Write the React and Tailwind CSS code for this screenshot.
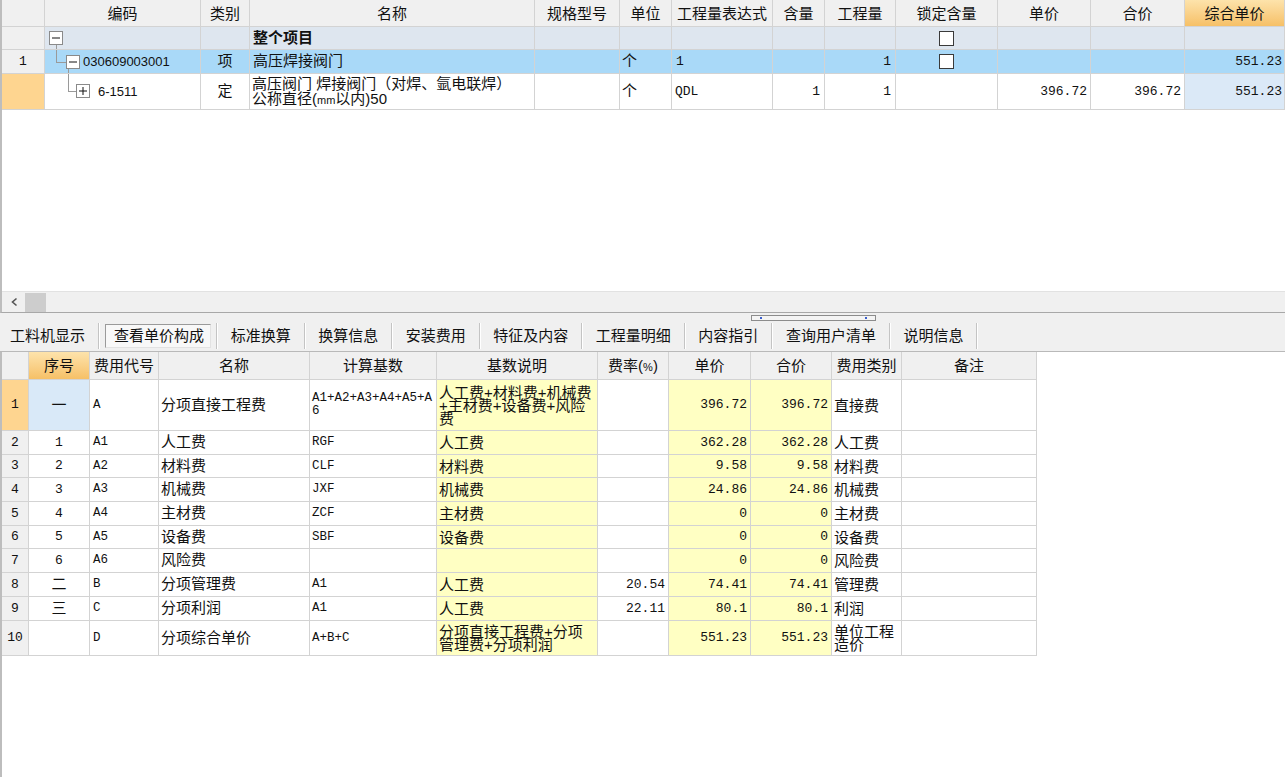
const CJK = "font-['Liberation_Sans','Noto_Sans_CJK_SC',sans-serif]";
const MONO = "font-['Liberation_Mono','Noto_Sans_CJK_SC',monospace]";

const TOP_GRID =
  "grid grid-cols-[43px_156px_49px_285px_85px_52px_101px_52px_71px_102px_93px_94px_100px]";
const BOT_GRID =
  "grid grid-cols-[27px_61px_69px_151px_127px_161px_71px_82px_81px_70px_135px]";

const cell = "border-r border-b border-[#d3d3d3] flex items-center overflow-hidden";

function TreeBox({ plus, className }) {
  return (
    <svg width="14" height="14" viewBox="0 0 14 14" className={className}>
      <rect x="0.5" y="0.5" width="13" height="13" fill="#fff" stroke="#8a8a8a" />
      <line x1="3" y1="7" x2="11" y2="7" stroke="#111" strokeWidth="1" />
      {plus && <line x1="7" y1="3" x2="7" y2="11" stroke="#111" strokeWidth="1" />}
    </svg>
  );
}

function Check() {
  return <div className="w-[15px] h-[15px] border border-[#3a3a3a] bg-white" />;
}

const topHeads = ["", "编码", "类别", "名称", "规格型号", "单位", "工程量表达式", "含量", "工程量", "锁定含量", "单价", "合价", "综合单价"];

function TopTable() {
  return (
    <div className="text-[15px] text-[#111]">
      {/* header */}
      <div className={`${TOP_GRID} h-[27px]`}>
        {topHeads.map((h, i) => (
          <div
            key={i}
            className={`${cell} justify-center pt-[2px] ${
              i === 12 ? "bg-gradient-to-b from-[#fde3ab] to-[#f6c066]" : "bg-[#f0f0f0]"
            }`}
          >
            {h}
          </div>
        ))}
      </div>

      {/* 整个项目 */}
      <div className={`${TOP_GRID} h-[23px]`}>
        <div className={`${cell} bg-[#f0f0f0]`} />
        <div className={`${cell} bg-[#dee6ef] relative`}>
          <TreeBox className="absolute left-[4px] top-[4px]" />
          <div className="absolute left-[11px] top-[18px] bottom-0 w-px bg-[#9a9a9a]" />
        </div>
        <div className={`${cell} bg-[#dee6ef]`} />
        <div className={`${cell} bg-[#dee6ef] pl-[3px] font-bold`}>整个项目</div>
        <div className={`${cell} bg-[#dee6ef]`} />
        <div className={`${cell} bg-[#dee6ef]`} />
        <div className={`${cell} bg-[#dee6ef]`} />
        <div className={`${cell} bg-[#dee6ef]`} />
        <div className={`${cell} bg-[#dee6ef]`} />
        <div className={`${cell} bg-[#dee6ef] justify-center`}>
          <Check />
        </div>
        <div className={`${cell} bg-[#dee6ef]`} />
        <div className={`${cell} bg-[#dee6ef]`} />
        <div className={`${cell} bg-[#dee6ef]`} />
      </div>

      {/* row 1 */}
      <div className={`${TOP_GRID} h-[24px]`}>
        <div className={`${cell} bg-[#f0f0f0] justify-center ${MONO} text-[13px]`}>1</div>
        <div className={`${cell} bg-[#a9d9f8] relative`}>
          <div className="absolute left-[11px] top-0 h-[12px] w-px bg-[#9a9a9a]" />
          <div className="absolute left-[11px] top-[12px] w-[10px] h-px bg-[#9a9a9a]" />
          <TreeBox className="absolute left-[21px] top-[5px]" />
          <div className="absolute left-[23px] top-[19px] bottom-0 w-px bg-[#9a9a9a]" />
          <span className="pl-[38px] text-[13px]">030609003001</span>
        </div>
        <div className={`${cell} bg-[#a9d9f8] justify-center`}>项</div>
        <div className={`${cell} bg-[#a9d9f8] pl-[3px]`}>高压焊接阀门</div>
        <div className={`${cell} bg-[#a9d9f8]`} />
        <div className={`${cell} bg-[#a9d9f8] pl-[2px]`}>个</div>
        <div className={`${cell} bg-[#a9d9f8] pl-[4px] ${MONO} text-[13px]`}>1</div>
        <div className={`${cell} bg-[#a9d9f8]`} />
        <div className={`${cell} bg-[#a9d9f8] justify-end pr-[4px] ${MONO} text-[13px]`}>1</div>
        <div className={`${cell} bg-[#a9d9f8] justify-center`}>
          <Check />
        </div>
        <div className={`${cell} bg-[#a9d9f8]`} />
        <div className={`${cell} bg-[#a9d9f8]`} />
        <div className={`${cell} bg-[#a9d9f8] justify-end pr-[2px] ${MONO} text-[13px]`}>551.23</div>
      </div>

      {/* row 2 */}
      <div className={`${TOP_GRID} h-[36px]`}>
        <div className={`${cell} bg-[#fed590]`} />
        <div className={`${cell} bg-white relative`}>
          <div className="absolute left-[23px] top-0 h-[17px] w-px bg-[#9a9a9a]" />
          <div className="absolute left-[23px] top-[17px] w-[8px] h-px bg-[#9a9a9a]" />
          <TreeBox plus className="absolute left-[31px] top-[10px]" />
          <span className="pl-[53px] text-[13px]">6-1511</span>
        </div>
        <div className={`${cell} bg-white justify-center`}>定</div>
        <div className={`${cell} bg-white pl-[2px] leading-[15px]`}>
          <div>
            <div>高压阀门 焊接阀门（对焊、氩电联焊）</div>
            <div>
              公称直径(<span className="text-[11px]">mm</span>以内)50
            </div>
          </div>
        </div>
        <div className={`${cell} bg-white`} />
        <div className={`${cell} bg-white pl-[2px]`}>个</div>
        <div className={`${cell} bg-white pl-[3px] ${MONO} text-[13px]`}>QDL</div>
        <div className={`${cell} bg-white justify-end pr-[4px] ${MONO} text-[13px]`}>1</div>
        <div className={`${cell} bg-white justify-end pr-[4px] ${MONO} text-[13px]`}>1</div>
        <div className={`${cell} bg-white`} />
        <div className={`${cell} bg-white justify-end pr-[3px] ${MONO} text-[13px]`}>396.72</div>
        <div className={`${cell} bg-white justify-end pr-[3px] ${MONO} text-[13px]`}>396.72</div>
        <div className={`${cell} bg-[#dbe9f7] justify-end pr-[2px] ${MONO} text-[13px]`}>551.23</div>
      </div>
    </div>
  );
}

const tabs = ["工料机显示", "查看单价构成", "标准换算", "换算信息", "安装费用", "特征及内容", "工程量明细", "内容指引", "查询用户清单", "说明信息"];

function TabBar() {
  return (
    <div className="relative h-[39px] bg-[#f0f0f0] border-b border-[#b9b9b9] flex items-start pt-[10px] text-[15px] text-[#111]">
      <div className="absolute left-[751px] top-[2px] w-[125px] h-[6px] border border-[#8c8c8c] bg-[#f4f4f4]">
        <div className="absolute left-[8px] top-[1px] w-[2px] h-[2px] bg-[#3a5fcd]" />
        <div className="absolute right-[8px] top-[1px] w-[2px] h-[2px] bg-[#3a5fcd]" />
      </div>
      {tabs.map((t, i) => (
        <div key={t} className="flex items-center">
          {i === 1 ? (
            <div className="px-[5px]">
              <div className="h-[24px] flex items-center pt-px pl-[8px] pr-[6px] border border-[#9a9a9a] border-b-[#e2e2e2] border-r-[#e2e2e2] bg-[#f8f8f8]">
                {t}
              </div>
            </div>
          ) : (
            <div className={`h-[24px] flex items-center pt-px ${i === 0 ? "pl-[10px] pr-[13px]" : "px-[12.75px]"}`}>{t}</div>
          )}
          <div className="h-[26px] w-[2px] border-l border-[#c4c4c4] bg-white" />
        </div>
      ))}
    </div>
  );
}

const botHeads = ["", "序号", "费用代号", "名称", "计算基数", "基数说明", "费率(%)", "单价", "合价", "费用类别", "备注"];

const rows = [
  { n: "1", seq: "一", code: "A", name: "分项直接工程费", base: "A1+A2+A3+A4+A5+A6", desc: "人工费+材料费+机械费+主材费+设备费+风险费", rate: "", price: "396.72", total: "396.72", type: "直接费", h: "h-[51px]" },
  { n: "2", seq: "1", code: "A1", name: "人工费", base: "RGF", desc: "人工费", rate: "", price: "362.28", total: "362.28", type: "人工费", h: "h-[24px]" },
  { n: "3", seq: "2", code: "A2", name: "材料费", base: "CLF", desc: "材料费", rate: "", price: "9.58", total: "9.58", type: "材料费", h: "h-[23px]" },
  { n: "4", seq: "3", code: "A3", name: "机械费", base: "JXF", desc: "机械费", rate: "", price: "24.86", total: "24.86", type: "机械费", h: "h-[24px]" },
  { n: "5", seq: "4", code: "A4", name: "主材费", base: "ZCF", desc: "主材费", rate: "", price: "0", total: "0", type: "主材费", h: "h-[24px]" },
  { n: "6", seq: "5", code: "A5", name: "设备费", base: "SBF", desc: "设备费", rate: "", price: "0", total: "0", type: "设备费", h: "h-[23px]" },
  { n: "7", seq: "6", code: "A6", name: "风险费", base: "", desc: "", rate: "", price: "0", total: "0", type: "风险费", h: "h-[24px]" },
  { n: "8", seq: "二", code: "B", name: "分项管理费", base: "A1", desc: "人工费", rate: "20.54", price: "74.41", total: "74.41", type: "管理费", h: "h-[24px]" },
  { n: "9", seq: "三", code: "C", name: "分项利润", base: "A1", desc: "人工费", rate: "22.11", price: "80.1", total: "80.1", type: "利润", h: "h-[24px]" },
  { n: "10", seq: "", code: "D", name: "分项综合单价", base: "A+B+C", desc: "分项直接工程费+分项管理费+分项利润", rate: "", price: "551.23", total: "551.23", type: "单位工程造价", h: "h-[35px]" },
];

function BottomTable() {
  return (
    <div className="w-[1035px] text-[15px] text-[#111]">
      <div className={`${BOT_GRID} h-[28px]`}>
        {botHeads.map((h, i) => (
          <div
            key={i}
            className={`${cell} justify-center pt-[2px] ${
              i === 1 ? "bg-gradient-to-b from-[#fde3ab] to-[#f6c066]" : "bg-[#f0f0f0]"
            }`}
          >
            {h === "费率(%)" ? (
              <span>
                费率(<span className="text-[11px]">%</span>)
              </span>
            ) : (
              h
            )}
          </div>
        ))}
      </div>
      {rows.map((r, i) => (
        <div key={r.n} className={`${BOT_GRID} ${r.h}`}>
          <div className={`${cell} justify-center ${MONO} text-[13px] ${i === 0 ? "bg-[#fed590]" : "bg-[#f0f0f0]"}`}>{r.n}</div>
          <div className={`${cell} justify-center ${i === 0 ? "bg-[#d9e9f8]" : "bg-white"} ${/\d/.test(r.seq) ? `${MONO} text-[13px]` : ""}`}>{r.seq}</div>
          <div className={`${cell} bg-white pl-[3px] ${MONO} text-[12.5px]`}>{r.code}</div>
          <div className={`${cell} bg-white pl-[2px]`}>{r.name}</div>
          <div className={`${cell} bg-white pl-[2px] ${MONO} text-[12.5px] leading-[13px] break-all`}>{r.base}</div>
          <div className={`${cell} bg-[#ffffc3] pl-[2px] leading-[13px] break-all`}>{r.desc}</div>
          <div className={`${cell} bg-white justify-end pr-[3px] ${MONO} text-[13px]`}>{r.rate}</div>
          <div className={`${cell} bg-[#ffffc3] justify-end pr-[3px] ${MONO} text-[13px]`}>{r.price}</div>
          <div className={`${cell} bg-[#ffffc3] justify-end pr-[3px] ${MONO} text-[13px]`}>{r.total}</div>
          <div className={`${cell} bg-white pl-[2px] leading-[13px]`}>{r.type}</div>
          <div className={`${cell} bg-white`} />
        </div>
      ))}
    </div>
  );
}

export default function App() {
  return (
    <div className={`w-[1285px] h-[777px] bg-white overflow-hidden flex flex-col ${CJK}`}>
      {/* top grid panel */}
      <div className="h-[313px] flex flex-col border-l-2 border-[#bdbdbd] border-b border-b-[#a8a8a8]">
        <div className="flex-1 bg-white">
          <TopTable />
        </div>
        <div className="h-[21px] bg-[#f0f0f0] border-t border-[#e2e2e2] flex items-center">
          <svg width="20" height="20" viewBox="0 0 20 20" className="ml-[3px]">
            <path d="M11.5 6.5 L7.5 10 L11.5 13.5" fill="none" stroke="#555" strokeWidth="1.6" />
          </svg>
          <div className="w-[21px] h-[19px] bg-[#cdcdcd]" />
        </div>
      </div>

      <TabBar />

      {/* bottom grid panel */}
      <div className="flex-1 border-l-2 border-[#bdbdbd] bg-white">
        <BottomTable />
      </div>
    </div>
  );
}
